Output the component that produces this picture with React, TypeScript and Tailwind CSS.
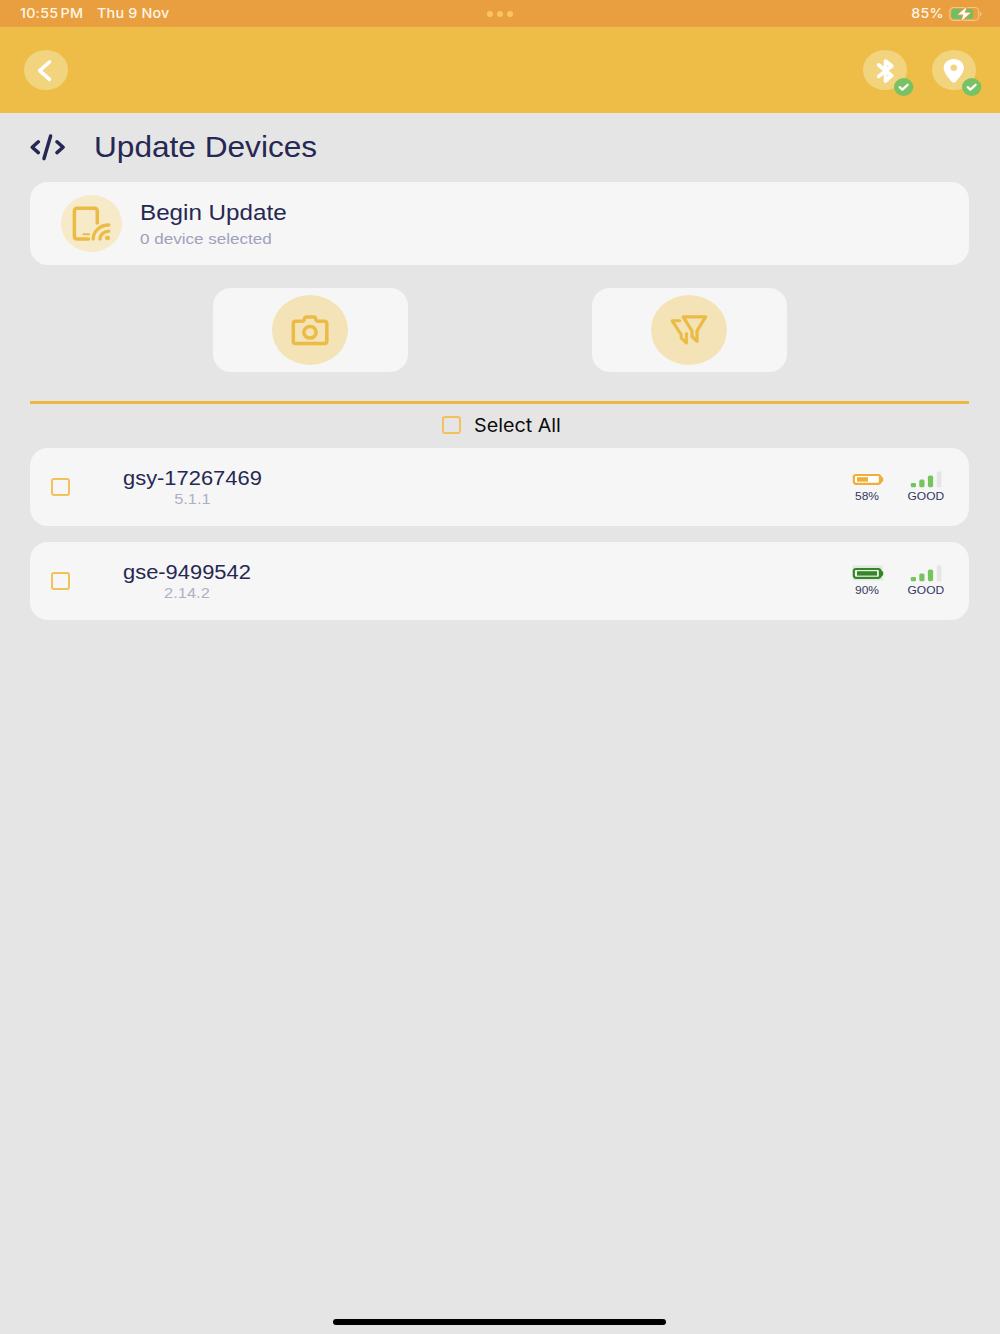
/**
 * Update Devices screen
 * Lists the nearby devices and lets the user pick the ones to update
 */
import { useState } from 'react'
import type { ReactNode } from 'react'

interface Device {
  id: string
  name: string
  version: string
  battery: number
  signal: string
}

const devices: Device[] = [
  { id: '1', name: 'gsy-17267469', version: '5.1.1', battery: 58, signal: 'GOOD' },
  { id: '2', name: 'gse-9499542', version: '2.14.2', battery: 90, signal: 'GOOD' },
]

function StatusBar() {
  return (
    <div className="h-[27px] bg-[#e99f3f] flex items-center justify-between pl-5 pr-[18px] text-[13px] font-medium text-[#fff6e6] font-['Inter',sans-serif]">
      <div className="flex w-[200px] whitespace-nowrap">
        <span className="w-[76.5px]">
          <span className="inline-block origin-left scale-x-[1.1] tracking-[0.2px]">10:55<span className="ml-[2px]">PM</span></span>
        </span>
        <span className="inline-block origin-left scale-x-[1.1] tracking-[0.2px]">Thu 9 Nov</span>
      </div>
      <div className="flex gap-[3.5px] -translate-x-px">
        <span className="w-[6.5px] h-[6px] rounded-full bg-[#fcc55c]" />
        <span className="w-[6.5px] h-[6px] rounded-full bg-[#fcc55c]" />
        <span className="w-[6.5px] h-[6px] rounded-full bg-[#fcc55c]" />
      </div>
      <div className="flex w-[200px] items-center justify-end gap-[4px]">
        <span className="inline-block origin-right scale-x-[1.09] tracking-[0.2px]">85%</span>
        <svg width="34" height="16" viewBox="0 0 34 16" fill="none">
          <rect x="1.800" y="1.500" width="28.800" height="12.800" rx="3.800" stroke="#f3c68a" strokeWidth="1.2" />
          <path d="M32 5.800v4.400c1-.4 1.600-1.200 1.600-2.200s-.6-1.800-1.600-2.200Z" fill="#f3c68a" />
          <rect x="3.500" y="3.200" width="21.500" height="9.500" rx="2.300" fill="#62c466" />
          <path d="M18.600 1 10 8.600h5.500L13.400 15 22.300 6.800h-5.700Z" fill="#fff" stroke="#e99f3f" strokeWidth="1.800" strokeLinejoin="round" paintOrder="stroke" />
        </svg>
      </div>
    </div>
  )
}

function StatusIcon({ children }: { children: ReactNode }) {
  return (
    <div className="relative w-11 h-10 rounded-[50%] bg-[#f2d47f]">
      {children}
      <svg className="absolute left-[30.5px] top-[28px]" width="20" height="18" viewBox="0 0 20 18" fill="none">
        <ellipse cx="9.700" cy="9" rx="9.700" ry="9" fill="#78c264" />
        <path d="m5.700 9.200 2.600 2.400 5.300-4.800" stroke="#fff" strokeWidth="2.300" strokeLinecap="round" strokeLinejoin="round" />
      </svg>
    </div>
  )
}

function Header() {
  return (
    <div className="h-[86px] bg-[#eebd47] flex items-start justify-between pt-[23px] pl-6 pr-[24.5px]">
      <button className="w-11 h-10 rounded-[50%] bg-[#f2d47f]">
        <svg width="44" height="40" viewBox="0 0 44 40" fill="none">
          <path d="M25.500 12 15.700 20.600l9.800 8.700" stroke="#fff" strokeWidth="3.600" strokeLinecap="round" strokeLinejoin="round" />
        </svg>
      </button>
      <div className="flex gap-[24.5px]">
        <StatusIcon>
          <svg width="44" height="40" viewBox="0 0 44 40" fill="none">
            <path d="m15.700 15 13 10.700-6.200 5.300V11l6.200 5-13 10.400" stroke="#fff" strokeWidth="3.700" strokeLinecap="round" strokeLinejoin="round" />
          </svg>
        </StatusIcon>
        <StatusIcon>
          <svg width="44" height="40" viewBox="0 0 44 40">
            <path fillRule="evenodd" d="M21.800 9c-5.600 0-10.100 3.800-10.100 9 0 4.200 4.900 10.200 8.300 14 1 1.100 2.500 1.100 3.500 0 3.400-3.800 8.400-9.800 8.400-14 0-5.200-4.500-9-10.100-9Zm0 5.500c1.900 0 3.400 1.400 3.400 3.200s-1.500 3.200-3.400 3.200-3.400-1.400-3.400-3.200 1.500-3.200 3.400-3.200Z" fill="#fff" />
          </svg>
        </StatusIcon>
      </div>
    </div>
  )
}

function Checkbox({ checked, onChange }: { checked: boolean; onChange: () => void }) {
  return (
    <button
      onClick={onChange}
      className={`w-[19px] h-[18px] shrink-0 rounded-[3px] border-2 border-[#f1c25a] ${checked ? 'bg-[#f1c25a]' : ''}`}
    />
  )
}

function BatteryIcon({ level }: { level: number }) {
  const full = level > 80
  const color = full ? '#37852a' : '#efae36'
  return (
    <svg width="32" height="17" viewBox="0 0 32 17" fill="none">
      {full && <rect x="0.500" y="0.500" width="30.500" height="15" fill="#dfecdd" />}
      <rect x="1.800" y="4" width="26.500" height="8.800" rx="2.200" fill={full ? '#eef6ec' : '#fff'} stroke={color} strokeWidth="2.200" />
      <path d="M26.800 3 31.200 7v3l-4.400 4Z" fill={color} />
      <rect x="5" y="6.200" width={full ? 20 : 11} height="4.400" fill={color} />
    </svg>
  )
}

function SignalIcon() {
  return (
    <svg width="32" height="17" viewBox="0 0 32 17">
      <rect x="0.800" y="12" width="5.200" height="4.200" rx="1.300" fill="#76c45d" />
      <rect x="9.300" y="8.500" width="5.200" height="7.700" rx="1.500" fill="#76c45d" />
      <rect x="17.900" y="4.500" width="5.200" height="11.700" rx="1.700" fill="#76c45d" />
      <rect x="26.800" y="0.500" width="4.600" height="15.700" rx="0.500" fill="#e5e5e5" />
    </svg>
  )
}

function DeviceRow({ device, checked, onToggle }: { device: Device; checked: boolean; onToggle: () => void }) {
  return (
    <div className="h-[78px] bg-[#f6f6f6] rounded-[18px] flex items-center pl-[20.5px] pr-[25.5px]">
      <Checkbox checked={checked} onChange={onToggle} />
      <div className="ml-[53px] flex-1 flex pt-[2px]">
        <div className="origin-left scale-x-[1.095] text-center">
          <div className="text-[20px] leading-[22px] text-[#262853]">{device.name}</div>
          <div className="text-[15px] leading-[20px] text-[#afb0c5]">{device.version}</div>
        </div>
      </div>
      <div className="flex gap-[22px] text-center text-[11px] leading-[14px] text-[#34365f]">
        <div className="w-9 flex flex-col items-center gap-[1px]">
          <BatteryIcon level={device.battery} />
          <span className="inline-block scale-x-[1.09]">{device.battery}%</span>
        </div>
        <div className="w-9 flex flex-col items-center gap-[1px]">
          <SignalIcon />
          <span className="inline-block scale-x-[1.09]">{device.signal}</span>
        </div>
      </div>
    </div>
  )
}

export default function App() {
  const [selected, setSelected] = useState<string[]>([])

  const toggle = (id: string) => {
    setSelected(selected.includes(id) ? selected.filter((s) => s !== id) : [...selected, id])
  }

  const allSelected = selected.length === devices.length

  return (
    <div className="h-[1334px] w-full bg-[#e5e5e5] flex flex-col font-['Liberation_Sans',sans-serif]">
      <StatusBar />
      <Header />

      <div className="flex-1 flex flex-col pl-[30px] pr-[31px]">
        {/* Title */}
        <div className="h-[69px] flex items-center pb-[2px]">
          <svg width="36" height="28" viewBox="0 0 36 28" fill="none" stroke="#262853" strokeLinecap="round" strokeLinejoin="round">
            <path d="M8.300 8.800 2.200 14.200l6.100 5.400M27 8.800l6.100 5.400-6.100 5.400" strokeWidth="3.500" />
            <path d="M20.600 3 14 25.600" strokeWidth="3.500" />
          </svg>
          <h1 className="ml-[28px] origin-left scale-x-[1.09] text-[29px] leading-[34px] text-[#262853]">Update Devices</h1>
        </div>

        {/* Begin update */}
        <div className="h-[83px] bg-[#f6f6f6] rounded-[18px] flex items-center pl-[31px]">
          <div className="w-[61px] h-[57px] rounded-[50%] bg-[#f6eac8]">
            <svg width="61" height="57" viewBox="0 0 61 57" fill="none" stroke="#ecbb45" strokeLinecap="round" strokeLinejoin="round">
              <path d="M36.300 28V16c0-1.800-1-2.800-2.800-2.800H16.200c-1.800 0-2.800 1-2.800 2.800v25.200c0 1.800 1 2.800 2.800 2.800h11.300" strokeWidth="3.500" />
              <path d="M22.500 39.200h5.500" strokeWidth="2" />
              <path d="M32.200 44c0-8.200 7.200-14 15.600-14M39 44c0-4.500 4-7.800 8.800-7.800" strokeWidth="3.300" />
              <ellipse cx="46.500" cy="43" rx="2.500" ry="2.300" fill="#ecbb45" stroke="none" />
            </svg>
          </div>
          <div className="ml-[18px] pt-[4px] origin-left scale-x-[1.1]">
            <div className="text-[22px] leading-[26px] text-[#262853]">Begin Update</div>
            <div className="text-[15.5px] leading-[26px] text-[#9fa1bc]">{selected.length} device selected</div>
          </div>
        </div>

        {/* Scan / filter */}
        <div className="mt-[23px] flex justify-center gap-[184px]">
          <button className="w-[195px] h-[84px] bg-[#f6f6f6] rounded-[18px] flex items-center justify-center">
            <span className="w-[76px] h-[70px] rounded-[50%] bg-[#f3e3b7]">
              <svg width="76" height="70" viewBox="0 0 76 70" fill="none" stroke="#ecbb45" strokeLinejoin="round">
                <path d="M23.800 26.200h6.500c1 0 1.500-.4 1.800-1.300l.7-2c.2-.7.700-1 1.500-1h7.500c.8 0 1.300.3 1.500 1l.7 2c.3.9.8 1.300 1.800 1.300h6.500c1.600 0 2.500.8 2.500 2.300v17.700c0 1.500-.9 2.300-2.500 2.300H23.800c-1.600 0-2.500-.8-2.500-2.300V28.500c0-1.500.9-2.300 2.500-2.300Z" strokeWidth="3.500" />
                <ellipse cx="38" cy="37.300" rx="6.200" ry="5.800" strokeWidth="3.500" />
              </svg>
            </span>
          </button>
          <button className="w-[195px] h-[84px] bg-[#f6f6f6] rounded-[18px] flex items-center justify-center">
            <span className="w-[76px] h-[70px] rounded-[50%] bg-[#f3e3b7]">
              <svg width="76" height="70" viewBox="0 0 76 70" fill="none" stroke="#ecbb45" strokeLinecap="round" strokeLinejoin="round">
                <path d="M32.200 21.800H54.600L46 35.800V46.300L41 41.500V36Z" strokeWidth="3.300" />
                <path d="M28.700 25.800H21.200L30.200 39.500V43L35.400 48V38.500" strokeWidth="3.100" />
              </svg>
            </span>
          </button>
        </div>

        <div className="mt-[29px] h-[3px] bg-[#edb943]" />

        {/* Select all */}
        <div className="h-[44px] flex items-center justify-center gap-[13px] pl-[4px] pb-[2px]">
          <Checkbox checked={allSelected} onChange={() => setSelected(allSelected ? [] : devices.map((d) => d.id))} />
          <span className="w-[87px] origin-left scale-x-[1.065] whitespace-nowrap text-[18.5px] leading-[24px] text-[#0b0b0b] font-['Inter',sans-serif]">Select All</span>
        </div>

        {/* Devices */}
        <div className="flex flex-col gap-4">
          {devices.map((device) => (
            <DeviceRow
              key={device.id}
              device={device}
              checked={selected.includes(device.id)}
              onToggle={() => toggle(device.id)}
            />
          ))}
        </div>
      </div>

      {/* Home indicator */}
      <div className="flex justify-center pb-[9px] pr-px">
        <div className="w-[333px] h-[6.5px] rounded-full bg-black" />
      </div>
    </div>
  )
}
